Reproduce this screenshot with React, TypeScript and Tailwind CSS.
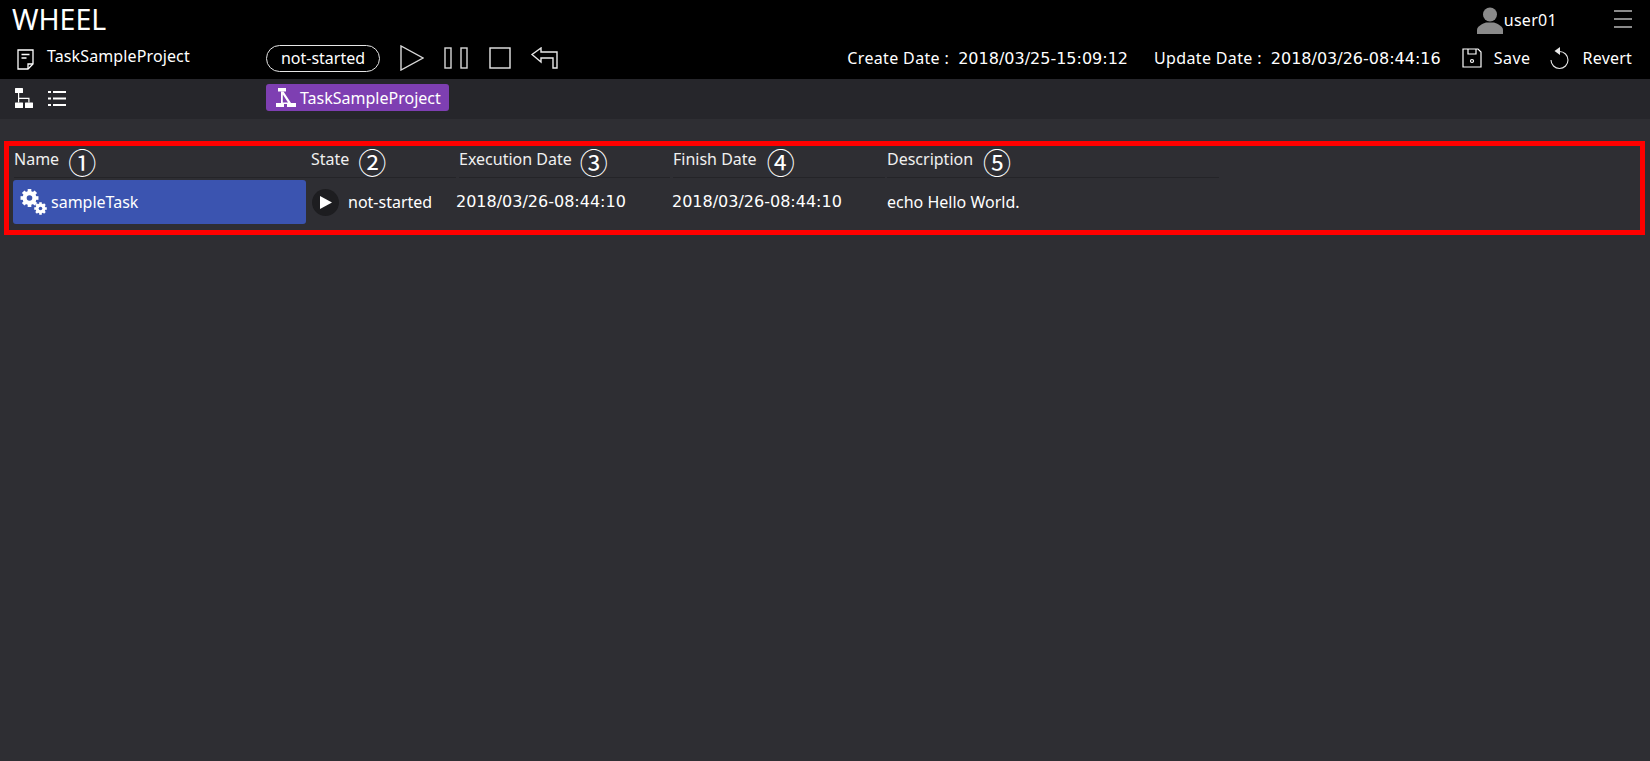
import React from "react";

const font = { fontFamily: '"Noto Sans", "Noto Sans CJK JP", sans-serif' };
const digits = { fontFamily: '"DejaVu Sans", sans-serif' };

function Doc() {
  return (
    <svg width="17" height="21" viewBox="0 0 17 21" fill="none" stroke="#fff" strokeWidth="1.3">
      <path d="M1 1h15v14l-5 5H1z" />
      <path d="M16 15h-5v5" />
      <path d="M4.500 5.500h8M4.500 9h5" strokeWidth="1.300" />
    </svg>
  );
}
function Tree() {
  return (
    <svg width="18" height="20" viewBox="0 0 18 20" fill="#fff">
      <rect x="0" y="0" width="8" height="5" rx="0.5" />
      <rect x="0" y="14.500" width="8" height="5.500" rx="0.5" />
      <rect x="10" y="14.500" width="8" height="5.500" rx="0.5" />
      <path d="M3 5h1.200v4.800h10.300v4.700h-1.200v-3.500H4.200v3.500H3z" />
    </svg>
  );
}
function ListIcon() {
  return (
    <svg width="18" height="17" viewBox="0 0 18 17" fill="#fff">
      <rect x="0" y="1" width="3" height="2" />
      <rect x="5" y="1" width="13" height="2" />
      <rect x="0" y="7.500" width="3" height="2" />
      <rect x="5" y="7.500" width="13" height="2" />
      <rect x="0" y="14" width="3" height="2" />
      <rect x="5" y="14" width="13" height="2" />
    </svg>
  );
}
function ProjectIcon() {
  return (
    <svg width="20" height="19" viewBox="0 0 20 19" fill="#fff">
      <rect x="2" y="0" width="8" height="3.500" />
      <rect x="0" y="15" width="8" height="4" />
      <rect x="11" y="15" width="9" height="4" />
      <path d="M5 3.500h2.500l7.500 11.500v1H6v-1.500h6L6.800 6.500V15H5z" />
    </svg>
  );
}
function Gears() {
  const gear = (cx: number, cy: number, r: number, hole: number) => {
    const teeth = Array.from({ length: 8 }, (_, i) => (
      <rect
        key={i}
        x={cx - r * 0.26}
        y={cy - r * 1.28}
        width={r * 0.52}
        height={r * 0.6}
        transform={`rotate(${i * 45} ${cx} ${cy})`}
      />
    ));
    return (
      <g>
        {teeth}
        <circle cx={cx} cy={cy} r={r} />
        <circle cx={cx} cy={cy} r={hole} fill="#3b54b0" />
      </g>
    );
  };
  return (
    <svg width="27" height="26" viewBox="0 0 27 26" fill="#fff">
      {gear(9.5, 9, 7, 2.8)}
      {gear(20.5, 19.5, 4.9, 1.8)}
    </svg>
  );
}
function User() {
  return (
    <svg width="26" height="27" viewBox="0 0 26 27" fill="#8a8a8a">
      <circle cx="13" cy="7.500" r="7" />
      <path d="M0 27v-4c0-4 6-6.500 9-7.500h8c3 1 9 3.500 9 7.500v4z" />
    </svg>
  );
}
function Save() {
  return (
    <svg width="20" height="20" viewBox="0 0 20 20" fill="none" stroke="#fff" strokeWidth="1.200">
      <path d="M1 1h15l3 3v15H1z" />
      <path d="M6 1v5h8V1" />
      <circle cx="10" cy="13" r="1.500" />
    </svg>
  );
}
function Revert() {
  return (
    <svg width="20" height="24" viewBox="0 0 20 24" fill="none" stroke="#e8e8e8" strokeWidth="1.100">
      <path d="M10.500 5.500a8.500 8.500 0 1 1-8.500 8.500" />
      <path d="M11 1v8l-5.500-4z" fill="#e8e8e8" stroke="none" />
    </svg>
  );
}

function Head({ label, num, gap }: { label: string; num: string; gap: string }) {
  return (
    <div className="flex items-start border-b border-[#242428] h-[33px]">
      <span className="text-[16px] leading-5 text-[#f0f0f0] mt-[4px] whitespace-nowrap">{label}</span>
      <span className={`${gap} text-[28px] leading-[33px] text-white mt-[2px]`}>{num}</span>
    </div>
  );
}

function DateValue({ children }: { children: React.ReactNode }) {
  return <span style={digits} className="text-[16px] leading-5 tracking-normal whitespace-nowrap">{children}</span>;
}

export default function App() {
  return (
    <div style={font} className="h-[761px] bg-[#2e2e33] text-white overflow-hidden relative">
      <header className="bg-black h-[79px] flex flex-col">
        <div className="h-[40px] flex items-start pl-3 pr-[18px]">
          <span className="text-[28.5px] leading-[38px] text-white">WHEEL</span>
          <div className="ml-auto flex items-center mt-[7px]">
            <User />
            <span className="text-[16px] leading-5 ml-[1px] mb-[2px] tracking-[0.3px]">user01</span>
            <div className="ml-[57px] mb-1 w-[18px] h-[18px] flex flex-col justify-between">
              <div className="h-[2px] bg-[#8a8a8a]" />
              <div className="h-[2px] bg-[#8a8a8a]" />
              <div className="h-[2px] bg-[#8a8a8a]" />
            </div>
          </div>
        </div>
        <div className="h-[39px] flex items-center pl-[17px] pr-[18px]">
          <Doc />
          <span className="text-[16px] leading-5 ml-[13px] w-[219px] -mt-[8px] tracking-[0.12px] whitespace-nowrap">TaskSampleProject</span>
          <div className="w-[114px] h-[27px] rounded-full border border-[#e6e6e6] flex items-center justify-center text-[16px] -mt-[3px]">
            not-started
          </div>
          <svg className="ml-5 -mt-[3px]" width="24" height="26" viewBox="0 0 24 26" fill="none" stroke="#d8d8d8" strokeWidth="1.400">
            <path d="M1 1v24l22-12z" />
          </svg>
          <svg className="ml-[20px] -mt-[3px]" width="24" height="22" viewBox="0 0 24 22" fill="none" stroke="#d8d8d8" strokeWidth="1.400">
            <rect x="1" y="1" width="6" height="20" />
            <rect x="17" y="1" width="6" height="20" />
          </svg>
          <svg className="ml-[21px] -mt-[3px]" width="22" height="22" viewBox="0 0 22 22" fill="none" stroke="#e8e8e8" strokeWidth="1.400">
            <rect x="1" y="1" width="20" height="20" />
          </svg>
          <svg className="ml-[20px] -mt-[3px]" width="27" height="22" viewBox="0 0 27 22" fill="none" stroke="#e8e8e8" strokeWidth="1.400">
            <path d="M1 7.500 10 1v4h16v16h-4V11H10v4z" />
          </svg>
          <div className="ml-auto flex items-center -mt-[3px]">
            <span className="mr-[26px] whitespace-nowrap text-[16px] leading-5 tracking-[0.35px]">
              Create Date :&nbsp; <DateValue>2018/03/25-15:09:12</DateValue>
            </span>
            <span className="mr-[21px] whitespace-nowrap text-[16px] leading-5 tracking-[0.35px]">
              Update Date :&nbsp; <DateValue>2018/03/26-08:44:16</DateValue>
            </span>
            <Save />
            <span className="ml-3 mr-[18px] text-[16px] leading-5 tracking-[0.5px]">Save</span>
            <Revert />
            <span className="ml-[14px] text-[16px] leading-5 tracking-[0.2px]">Revert</span>
          </div>
        </div>
      </header>

      <nav className="bg-[#26262b] h-[40px] flex items-center pl-[15px]">
        <div className="-mt-[2px]"><Tree /></div>
        <div className="ml-[15px] -mt-[1px]"><ListIcon /></div>
        <div className="ml-[200px] h-[27px] w-[183px] rounded-[3px] bg-[#7e3fb2] flex items-center pl-[10px] -mt-[3px]">
          <ProjectIcon />
          <span className="text-[16px] ml-[4px] whitespace-nowrap">TaskSampleProject</span>
        </div>
      </nav>

      <main className="pt-[26px] pl-[13px] w-[1219px]">
        <div className="grid grid-cols-[298px_145px_214px_215px_1fr]">
          <div className="pl-[1px]"><Head label="Name" num="①" gap="ml-[9px]" /></div>
          <div><Head label="State" num="②" gap="ml-[9px]" /></div>
          <div className="pl-[3px]"><Head label="Execution Date" num="③" gap="ml-[8px]" /></div>
          <div className="pl-[3px]"><Head label="Finish Date" num="④" gap="ml-[10px]" /></div>
          <div className="pl-[2px]"><Head label="Description" num="⑤" gap="ml-[10px]" /></div>

          <div className="pt-[2px] pr-[5px]">
            <div className="h-[44px] rounded-[3px] bg-[#3b54b0] flex items-center pl-[7px]">
              <Gears />
              <span className="text-[16px] ml-[4px]">sampleTask</span>
            </div>
          </div>
          <div className="pt-[2px] flex items-center pl-[1px]">
            <div className="w-[27px] h-[27px] rounded-full bg-[#1d1d20] flex items-center justify-center">
              <svg width="12" height="13" viewBox="0 0 12 13" fill="#fff"><path d="M0 0v13l12-6.500z" /></svg>
            </div>
            <span className="text-[16px] ml-[9px] whitespace-nowrap">not-started</span>
          </div>
          <div className="pt-[2px] flex items-center"><DateValue>2018/03/26-08:44:10</DateValue></div>
          <div className="pt-[2px] flex items-center pl-[2px]"><DateValue>2018/03/26-08:44:10</DateValue></div>
          <div className="pt-[2px] flex items-center text-[16px] pl-[2px]">echo Hello World.</div>
        </div>
      </main>

      <div className="absolute left-[4px] top-[141px] w-[1641px] h-[94px] border-[5px] border-[#ff0000] pointer-events-none" />
    </div>
  );
}
